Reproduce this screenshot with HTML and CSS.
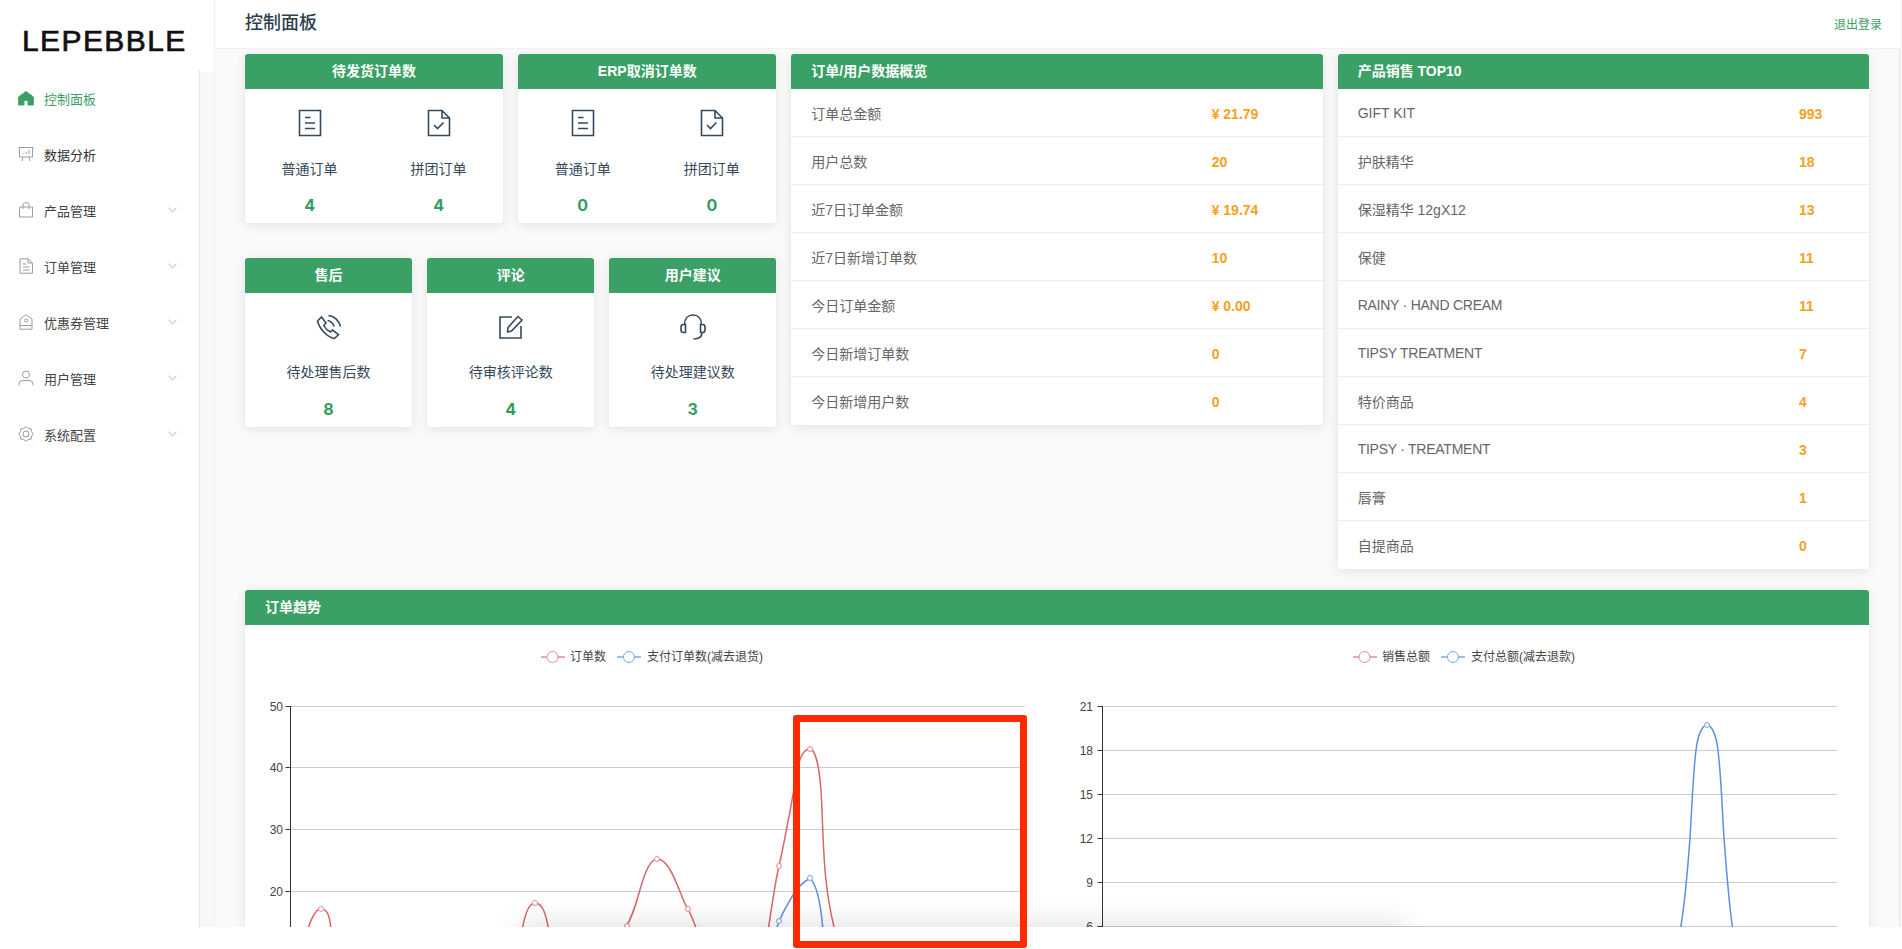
FILE: index.html
```html
<!DOCTYPE html>
<html lang="zh-CN">

<head>
    <meta charset="UTF-8">
    <meta name="viewport" content="width=device-width, initial-scale=1.0">
    <title>控制面板</title>
    <link rel="stylesheet" href="styles.css">
</head>

<body>
    <div class="app">
        <aside class="sidebar">
            <div class="logo">LEPEBBLE</div>
            <nav class="menu">
                <a class="menu-item active">
                    <svg class="menu-icon" viewBox="0 0 16 16"><path class="fill-green" d="M8 1.500 15.300 6.900V15H10V10.400H6V15H.7V6.900Z" /></svg>
                    <span>控制面板</span>
                </a>
                <a class="menu-item plain">
                    <svg class="menu-icon" viewBox="0 0 16 16"><path d="M.5 1.500H15.500M1.500 1.500V11H14.500V1.500M5 11 4 15M11 11 12 15M5 8V7M8 8V5.500M11 8V4" /></svg>
                    <span>数据分析</span>
                </a>
                <a class="menu-item">
                    <svg class="menu-icon" viewBox="0 0 16 16"><path d="M1.500 5H14.500V15H1.500ZM5 5V2.500Q5 .8 6.500 .8H9.500Q11 .8 11 2.500V5M5 5V7M11 5V7" /></svg>
                    <span>产品管理</span>
                    <svg class="chevron" viewBox="0 0 10 6"><path d="M.5 .5 5 5 9.500 .5" /></svg>
                </a>
                <a class="menu-item">
                    <svg class="menu-icon" viewBox="0 0 16 16"><path d="M2 .8H10L14.500 5V15.200H2ZM10 .8V5H14.500M5 6H8M5 9H11.500M5 12H11.500" /></svg>
                    <span>订单管理</span>
                    <svg class="chevron" viewBox="0 0 10 6"><path d="M.5 .5 5 5 9.500 .5" /></svg>
                </a>
                <a class="menu-item">
                    <svg class="menu-icon" viewBox="0 0 16 16"><path d="M2 5 8 .8 14 5V15.200H2ZM2 11.500H14" /><circle cx="8" cy="6.500" r="1.500" /></svg>
                    <span>优惠券管理</span>
                    <svg class="chevron" viewBox="0 0 10 6"><path d="M.5 .5 5 5 9.500 .5" /></svg>
                </a>
                <a class="menu-item">
                    <svg class="menu-icon" viewBox="0 0 16 16"><circle cx="8" cy="4.500" r="3.500" /><path d="M1 15.500V14Q1 10.500 5 10.500H11Q15 10.500 15 14V15.500" /></svg>
                    <span>用户管理</span>
                    <svg class="chevron" viewBox="0 0 10 6"><path d="M.5 .5 5 5 9.500 .5" /></svg>
                </a>
                <a class="menu-item">
                    <svg class="menu-icon" viewBox="0 0 16 16"><path d="M15.300 8 13.540 10.300 13.160 13.160 10.300 13.540 8 15.300 5.700 13.540 2.840 13.160 2.460 10.300 .7 8 2.460 5.700 2.840 2.840 5.700 2.460 8 .7 10.300 2.460 13.160 2.840 13.540 5.700Z" /><circle cx="8" cy="8" r="3" /></svg>
                    <span>系统配置</span>
                    <svg class="chevron" viewBox="0 0 10 6"><path d="M.5 .5 5 5 9.500 .5" /></svg>
                </a>
            </nav>
        </aside>

        <div class="main">
            <header class="topbar">
                <h1 class="page-title">控制面板</h1>
                <a class="logout">退出登录</a>
            </header>

            <div class="content">
                <div class="dashboard">
                    <div class="left-col">
                        <div class="card-row">
                            <section class="card">
                                <h2 class="card-head center">待发货订单数</h2>
                                <div class="card-body cols">
                                    <div class="metric">
                                        <svg class="metric-icon doc" viewBox="0 0 24 28"><path d="M1.500 1.500H22.500V26.500H1.500ZM7 8.500H12.500M7 14H17M7 19.500H17" /></svg>
                                        <div class="metric-label">普通订单</div>
                                        <div class="metric-num">4</div>
                                    </div>
                                    <div class="metric">
                                        <svg class="metric-icon doc" viewBox="0 0 24 28"><path d="M1.500 1.500H15L22.500 9V26.500H1.500ZM15 1.500V9H22.500M7 16 10.500 19.500 16.500 13.500" /></svg>
                                        <div class="metric-label">拼团订单</div>
                                        <div class="metric-num">4</div>
                                    </div>
                                </div>
                            </section>
                            <section class="card">
                                <h2 class="card-head center">ERP取消订单数</h2>
                                <div class="card-body cols">
                                    <div class="metric">
                                        <svg class="metric-icon doc" viewBox="0 0 24 28"><path d="M1.500 1.500H22.500V26.500H1.500ZM7 8.500H12.500M7 14H17M7 19.500H17" /></svg>
                                        <div class="metric-label">普通订单</div>
                                        <div class="metric-num">0</div>
                                    </div>
                                    <div class="metric">
                                        <svg class="metric-icon doc" viewBox="0 0 24 28"><path d="M1.500 1.500H15L22.500 9V26.500H1.500ZM15 1.500V9H22.500M7 16 10.500 19.500 16.500 13.500" /></svg>
                                        <div class="metric-label">拼团订单</div>
                                        <div class="metric-num">0</div>
                                    </div>
                                </div>
                            </section>
                        </div>

                        <div class="card-row three">
                            <section class="card">
                                <h2 class="card-head center">售后</h2>
                                <div class="card-body">
                                    <div class="metric">
                                        <svg class="metric-icon" viewBox="0 0 28 28"><path d="M2.500 8 6.500 4 11 10 8.800 12.500C10.300 15.500 12.500 17.500 15.500 19L17.500 17 23.500 21.500 19.500 25.500C12 24 4.500 16 2.500 8ZM12.500 7.500C15.500 8 18 10.500 19 13.500M13.500 2.500C19 3 24 7.500 25.500 13.500" /></svg>
                                        <div class="metric-label">待处理售后数</div>
                                        <div class="metric-num">8</div>
                                    </div>
                                </div>
                            </section>
                            <section class="card">
                                <h2 class="card-head center">评论</h2>
                                <div class="card-body">
                                    <div class="metric">
                                        <svg class="metric-icon" viewBox="0 0 28 28"><path d="M15 4H3V25H24V13M11 14.500 21 3.500 25 7 14.500 18 10.500 19Z" /></svg>
                                        <div class="metric-label">待审核评论数</div>
                                        <div class="metric-num">4</div>
                                    </div>
                                </div>
                            </section>
                            <section class="card">
                                <h2 class="card-head center">用户建议</h2>
                                <div class="card-body">
                                    <div class="metric">
                                        <svg class="metric-icon" viewBox="0 0 28 28"><path d="M5.500 11.500C5.500 5.500 9 2 14 2 19 2 22.500 5.500 22.500 11.500M5.500 11.500H4.500Q2 11.500 2 14V17Q2 19.500 4.500 19.500H6.500V11.500ZM21.500 11.500H23.500Q26 11.500 26 14V17Q26 19.500 23.500 19.500H21.500ZM23 19.500C23 24 19.500 26 14.500 26" /></svg>
                                        <div class="metric-label">待处理建议数</div>
                                        <div class="metric-num">3</div>
                                    </div>
                                </div>
                            </section>
                        </div>
                    </div>

                    <section class="card">
                        <h2 class="card-head">订单/用户数据概览</h2>
                        <ul class="stat-list">
                            <li><span>订单总金额</span><b class="amount">¥ 21.79</b></li>
                            <li><span>用户总数</span><b class="amount">20</b></li>
                            <li><span>近7日订单金额</span><b class="amount">¥ 19.74</b></li>
                            <li><span>近7日新增订单数</span><b class="amount">10</b></li>
                            <li><span>今日订单金额</span><b class="amount">¥ 0.00</b></li>
                            <li><span>今日新增订单数</span><b class="amount">0</b></li>
                            <li><span>今日新增用户数</span><b class="amount">0</b></li>
                        </ul>
                    </section>

                    <section class="card">
                        <h2 class="card-head">产品销售 TOP10</h2>
                        <ul class="stat-list narrow">
                            <li><span>GIFT KIT</span><b class="amount">993</b></li>
                            <li><span>护肤精华</span><b class="amount">18</b></li>
                            <li><span>保湿精华 12gX12</span><b class="amount">13</b></li>
                            <li><span>保健</span><b class="amount">11</b></li>
                            <li><span class="latin">RAINY · HAND CREAM</span><b class="amount">11</b></li>
                            <li><span class="latin">TIPSY TREATMENT</span><b class="amount">7</b></li>
                            <li><span>特价商品</span><b class="amount">4</b></li>
                            <li><span class="latin">TIPSY · TREATMENT</span><b class="amount">3</b></li>
                            <li><span>唇膏</span><b class="amount">1</b></li>
                            <li><span>自提商品</span><b class="amount">0</b></li>
                        </ul>
                    </section>
                </div>

                <section class="card trend">
                    <h2 class="card-head">订单趋势</h2>
                    <div class="charts">
                        <svg class="chart" viewBox="0 0 812 400">
                            <path class="legend-line red" d="M296 32H320" />
                            <circle class="legend-dot red" cx="307.500" cy="32" r="5.500" />
                            <text class="legend-text" x="325" y="36">订单数</text>
                            <path class="legend-line blue" d="M372 32H396" />
                            <circle class="legend-dot blue" cx="384" cy="32" r="5.500" />
                            <text class="legend-text" x="402" y="36">支付订单数(减去退货)</text>

                            <path class="grid" d="M45.500 81.500H780M45.500 142.500H780M45.500 204.500H780M45.500 266.500H780" />
                            <path class="axis" d="M45.500 81V400M40.500 81.500H45.500M40.500 142.500H45.500M40.500 204.500H45.500M40.500 266.500H45.500" />
                            <text class="tick" x="38" y="86">50</text>
                            <text class="tick" x="38" y="147">40</text>
                            <text class="tick" x="38" y="209">30</text>
                            <text class="tick" x="38" y="271">20</text>

                            <path class="curve red" d="M62 306C66 295 70 284 76 284 83 284 85 292 86 306" />
                            <path class="curve red" d="M277 306C280 288 284 278 290 278 298 278 301 290 304 306" />
                            <path class="curve red" d="M378 306C388 295 393 270 397 258 402 242 407 234 412 234 422 234 428 250 434 264 438 274 440 280 443 284 446 290 449 296 452 306" />
                            <path class="curve red" d="M523 306C527 280 530 258 534 241 541 210 547 175 553 142 556 128 561 124 565 124 570 124 574 140 576 165 578 200 578 230 581 255 583 275 586 290 590 306" />
                            <path class="curve blue" d="M531 306 534 296C540 283 545 275 548 270 553 262 560 256 565 253 572 260 576 280 578 306" />
                            <circle class="dot red" cx="76" cy="284" r="2.500" />
                            <circle class="dot red" cx="290" cy="278" r="2.500" />
                            <circle class="dot red" cx="382" cy="301" r="2.500" />
                            <circle class="dot red" cx="412" cy="234" r="2.500" />
                            <circle class="dot red" cx="443" cy="284" r="2.500" />
                            <circle class="dot red" cx="534" cy="241" r="2.500" />
                            <circle class="dot red" cx="565" cy="124" r="2.500" />
                            <circle class="dot blue" cx="534" cy="296" r="2.500" />
                            <circle class="dot blue" cx="565" cy="253" r="2.500" />
                        </svg>

                        <svg class="chart" viewBox="0 0 812 400">
                            <path class="legend-line red" d="M296 32H320" />
                            <circle class="legend-dot red" cx="307.500" cy="32" r="5.500" />
                            <text class="legend-text" x="325" y="36">销售总额</text>
                            <path class="legend-line blue" d="M384 32H408" />
                            <circle class="legend-dot blue" cx="396" cy="32" r="5.500" />
                            <text class="legend-text" x="414" y="36">支付总额(减去退款)</text>

                            <path class="grid" d="M45.500 81.500H780M45.500 125.500H780M45.500 169.500H780M45.500 213.500H780M45.500 257.500H780M45.500 301.500H780" />
                            <path class="axis" d="M45.500 81V400M40.500 81.500H45.500M40.500 125.500H45.500M40.500 169.500H45.500M40.500 213.500H45.500M40.500 257.500H45.500M40.500 301.500H45.500" />
                            <text class="tick" x="36" y="86">21</text>
                            <text class="tick" x="36" y="130">18</text>
                            <text class="tick" x="36" y="174">15</text>
                            <text class="tick" x="36" y="218">12</text>
                            <text class="tick" x="36" y="262">9</text>
                            <text class="tick" x="36" y="306">6</text>

                            <path class="curve blue" d="M623 306C627 285 631 240 633 213 635 180 636 150 639 125 641 108 646 100 650 100 654 100 659 108 661 125 664 150 665 180 667 213 669 240 672 280 676 306" />
                            <circle class="dot blue" cx="650" cy="100" r="2.500" />
                        </svg>
                    </div>
                </section>
            </div>
        </div>

        <div class="bottom-shade"></div>
    </div>

    <div class="red-mark"></div>
</body>

</html>
```

FILE: styles.css
```css
* {
    box-sizing: border-box;
    font-family: "Liberation Sans", "Noto Sans CJK SC", sans-serif;
}

html,
body {
    margin: 0;
    height: 100%;
    background-color: #fff;
    overflow: hidden;
}

body {
    position: relative;
}

h1,
h2,
ul {
    margin: 0;
    padding: 0;
}

/* the page stops short of the window, white below it */
.app {
    position: relative;
    display: flex;
    height: 927px;
    overflow: hidden;
    background-color: #f8f8fa;
}

.sidebar {
    width: 214px;
    flex-shrink: 0;
    display: flex;
    flex-direction: column;
}

.logo {
    height: 72px;
    padding: 23px 0 0 22px;
    background-color: #fff;
    color: #111;
    font-size: 30px;
    line-height: 36px;
    letter-spacing: 1.4px;
    -webkit-text-stroke: 0.7px #111;
}

.menu {
    flex: 1;
    width: 200px;
    margin-top: -2px;
    background-color: #fff;
    border-right: 1px solid #e6e6ea;
}

.menu-item {
    display: flex;
    align-items: center;
    height: 56px;
    padding: 0 22px 0 18px;
    color: #444;
    font-size: 13px;
}

.menu-item.plain {
    color: #333;
}

.menu-item.active {
    color: #3aa065;
}

.menu-icon {
    width: 16px;
    height: 16px;
    margin-right: 10px;
    fill: none;
    stroke: #9a9ca6;
    stroke-width: 1;
    stroke-linejoin: round;
}

.menu-icon .fill-green {
    fill: #3aa065;
    stroke: #3aa065;
}

.chevron {
    width: 9px;
    height: 6px;
    margin-left: auto;
    fill: none;
    stroke: #a8aab2;
    stroke-width: 1;
}

.main {
    flex: 1;
    min-width: 0;
    margin-right: 2px;
    background-color: #fafafa;
    border-left: 1px solid #eef0f6;
    border-right: 1px solid #e8e8ea;
}

.topbar {
    display: flex;
    align-items: center;
    justify-content: space-between;
    height: 49px;
    margin-right: -1px;
    padding: 0 18px 2px 30px;
    background-color: #fff;
    border-bottom: 1px solid #eef0f6;
}

.page-title {
    color: #2c3e50;
    font-size: 18px;
    font-weight: 500;
    line-height: 46px;
}

.logout {
    color: #3aa065;
    font-size: 12px;
}

.content {
    padding: 5px 30px 0;
}

.dashboard {
    display: grid;
    grid-template-columns: repeat(3, 1fr);
    gap: 15px;
    align-items: start;
}

.card-row {
    display: grid;
    grid-template-columns: repeat(2, 1fr);
    gap: 15px;
    margin-bottom: 35px;
}

.card-row.three {
    grid-template-columns: repeat(3, 1fr);
    margin-bottom: 0;
}

.card {
    background-color: #fff;
    border-radius: 3px;
    box-shadow: 0 2px 12px 0 rgba(0, 0, 0, 0.1);
}

.card-head {
    height: 35px;
    padding: 0 20px;
    background-color: #3aa065;
    border-radius: 3px 3px 0 0;
    color: #fff;
    font-size: 14px;
    font-weight: 700;
    line-height: 35px;
}

.card-head.center {
    padding: 0;
    text-align: center;
}

.card-body {
    height: 134px;
}

.cols {
    display: grid;
    grid-template-columns: 1fr 1fr;
}

.metric {
    display: flex;
    flex-direction: column;
    align-items: center;
    padding-top: 20px;
}

.metric-icon {
    width: 28px;
    height: 28px;
    fill: none;
    stroke: #34495e;
    stroke-width: 1.6;
}

.metric-icon.doc {
    width: 24px;
    margin-bottom: 1px;
}

.metric-label {
    margin-top: 21px;
    color: #34495e;
    font-size: 14px;
    line-height: 20px;
}

.metric-num {
    margin-top: 17px;
    color: #2f9e5f;
    font-family: Inter, "Liberation Sans", sans-serif;
    font-size: 16px;
    font-weight: 700;
    line-height: 20px;
}

.cols .metric-num {
    margin-top: 16px;
}

.stat-list {
    list-style: none;
}

.stat-list li {
    display: flex;
    align-items: center;
    justify-content: space-between;
    height: 48px;
    padding: 0 20px;
    color: #666;
    font-size: 14px;
    border-bottom: 1px solid #eee;
}

.stat-list li:last-child {
    border-bottom: 0;
}

.latin {
    letter-spacing: -0.25px;
}

.amount {
    width: 91px;
    padding-top: 2px;
    color: #f4a11d;
    font-size: 14px;
}

.stat-list.narrow .amount {
    width: 50px;
}

.trend {
    margin-top: 21px;
}

.charts {
    display: flex;
}

.chart {
    display: block;
    width: 812px;
    height: 400px;
    flex-shrink: 0;
}

.grid {
    fill: none;
    stroke: #ccc;
    stroke-width: 1;
}

.axis {
    fill: none;
    stroke: #333;
    stroke-width: 1;
}

.tick {
    fill: #444;
    font-size: 12px;
    text-anchor: end;
}

.legend-text {
    fill: #444;
    font-size: 12px;
}

.curve {
    fill: none;
    stroke-width: 1.5;
}

.curve.red {
    stroke: #d9656a;
}

.curve.blue {
    stroke: #5a8fe6;
}

.legend-line {
    fill: none;
    stroke-width: 1.5;
}

.legend-line.red,
.legend-dot.red,
.dot.red {
    stroke: #e68d91;
}

.legend-line.blue,
.legend-dot.blue,
.dot.blue {
    stroke: #78a6ee;
}

.legend-dot,
.dot {
    fill: #fff;
    stroke-width: 1;
}

/* shadow of something just under the page edge */
.bottom-shade {
    position: absolute;
    left: 520px;
    width: 885px;
    top: 927px;
    height: 40px;
    box-shadow: 0 0 30px rgba(0, 0, 0, 0.16);
}

.red-mark {
    position: absolute;
    left: 793px;
    top: 715px;
    width: 234px;
    height: 233px;
    border: 7px solid #ff2a00;
    border-radius: 3px;
}
```
